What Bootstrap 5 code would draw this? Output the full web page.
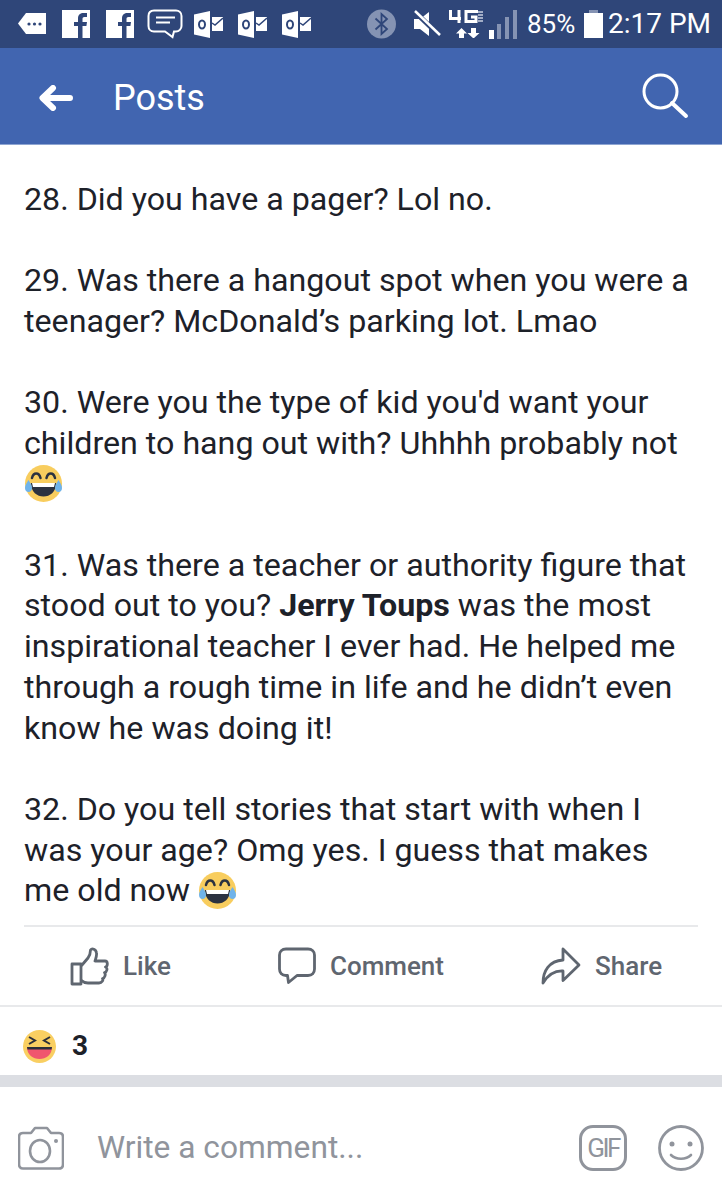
<!DOCTYPE html>
<html lang="en"><head><meta charset="utf-8"><title>Posts</title>
<link href="https://cdn.jsdelivr.net/npm/bootstrap@5.3.0/dist/css/bootstrap.min.css" rel="stylesheet">
<style>
html,body{margin:0;background:#fff}
body{font-family:Roboto,"Liberation Sans",sans-serif;width:722px;height:1200px;overflow:hidden;color:#1d2129}
.stat-bar{height:48px;background:#2f4679;color:#fff;padding-left:18px;font-size:28px;line-height:48px}
.stat-bar svg{display:block;flex:none}
.stat-pct{font-size:26px;margin-right:10px;width:47px;white-space:nowrap}
.app-bar{height:97px;background:#4165b0;border-bottom:1px solid #8ea5d2;color:#fff;padding-left:39px;padding-right:33px}
.app-back{margin-top:3px}
.app-title{font-size:36px;margin-left:40px;margin-top:3px;line-height:1}
.post-body{padding:33.500px 24px 0;font-size:32.2px;line-height:40.7px;height:780px;color:#1d2129}
.post-body p{margin:0 0 40.7px}
.post-body b{font-weight:700}
.emo{display:inline-block;vertical-align:-9px}
.act-row{margin:0 24px;height:80px;border-top:2px solid #e8e9eb;padding-left:46px}
.act-item{color:#5f6670;font-size:26px;font-weight:500;gap:14px}
.act-mid{margin-left:107px}
.act-last{margin-left:97px}
.act-full{border-bottom:2px solid #e8e9eb}
.react-row{height:68px;padding-left:23px;padding-top:10px;gap:16px;font-size:28px;font-weight:700;color:#1d2129}
.gap-band{height:12px;background:#dcdee3}
.cmt-row{height:113px;padding:9px 18px 0;color:#8f949b}
.cmt-text{font-size:31.7px;margin-left:33px;color:#90949c}
.gif-box{width:48px;height:46px;border:3px solid #90949c;border-radius:14px;font-size:26px;letter-spacing:-2.500px;color:#90949c;line-height:1}
</style></head><body>
<div class="stat-bar d-flex align-items-center">
<svg width="28" height="22" viewBox="0 0 28 22" style="margin-right:16px"><path d="M8 0H28V21H8L0 10.5Z" fill="#fff"/><circle cx="11" cy="11" r="1.6" fill="#2f4679"/><circle cx="16.5" cy="11" r="1.6" fill="#2f4679"/><circle cx="22" cy="11" r="1.6" fill="#2f4679"/></svg>
<svg width="28" height="28" viewBox="0 0 28 28" style="margin-right:16px"><rect width="28" height="28" fill="#fff"/><path d="M16 28V16H12V12H16V8.5C16 4.5 18.5 3 21.5 3H25V7H22.5C21 7 20.5 7.800 20.500 9V12H25L24.400 16H20.500V28Z" fill="#2f4679"/></svg>
<svg width="28" height="28" viewBox="0 0 28 28" style="margin-right:13px"><rect width="28" height="28" fill="#fff"/><path d="M16 28V16H12V12H16V8.5C16 4.5 18.5 3 21.5 3H25V7H22.5C21 7 20.5 7.800 20.500 9V12H25L24.400 16H20.500V28Z" fill="#2f4679"/></svg>
<svg width="36" height="30" viewBox="0 0 36 30" style="margin-right:11px"><path d="M7 1.500H29C32 1.500 34.500 3.500 34.500 7V17C34.500 20 32 22.500 29 22.500H27L25.500 28L18 22.500H7C3.500 22.500 1.500 20 1.500 17V7C1.500 3.500 3.500 1.500 7 1.500Z" fill="none" stroke="#fff" stroke-width="2"/><path d="M9 8.500H28M9 13.500H23" stroke="#fff" stroke-width="2"/></svg>
<svg width="29" height="27" viewBox="0 0 29 27" style="margin-right:15px"><path d="M0 3.500L16 0V27L0 23.500Z" fill="#fff"/><path d="M18 6H29V20H18Z" fill="#fff"/><ellipse cx="8" cy="13.500" rx="3" ry="4" fill="none" stroke="#2f4679" stroke-width="2"/><path d="M18 12L21 14L29 7" fill="none" stroke="#2f4679" stroke-width="1.500"/></svg>
<svg width="29" height="27" viewBox="0 0 29 27" style="margin-right:15px"><path d="M0 3.500L16 0V27L0 23.500Z" fill="#fff"/><path d="M18 6H29V20H18Z" fill="#fff"/><ellipse cx="8" cy="13.500" rx="3" ry="4" fill="none" stroke="#2f4679" stroke-width="2"/><path d="M18 12L21 14L29 7" fill="none" stroke="#2f4679" stroke-width="1.500"/></svg>
<svg width="29" height="27" viewBox="0 0 29 27" style="margin-right:56px"><path d="M0 3.500L16 0V27L0 23.500Z" fill="#fff"/><path d="M18 6H29V20H18Z" fill="#fff"/><ellipse cx="8" cy="13.500" rx="3" ry="4" fill="none" stroke="#2f4679" stroke-width="2"/><path d="M18 12L21 14L29 7" fill="none" stroke="#2f4679" stroke-width="1.500"/></svg>
<svg width="29" height="30" viewBox="0 0 29 30" style="margin-right:17px"><circle cx="14.500" cy="15" r="14.500" fill="#8593b3"/><path d="M8.500 9.500L20 20L14.500 25V5L20 10L8.500 20.500" fill="none" stroke="#2f4679" stroke-width="1.800"/></svg>
<svg width="28" height="28" viewBox="0 0 28 28" style="margin-right:8px"><path d="M1 9H7L16 2V26L7 19H1Z" fill="#fff"/><path d="M1 1L27 26" stroke="#2f4679" stroke-width="5"/><path d="M2 1L27 25" stroke="#fff" stroke-width="2.500"/></svg>
<svg width="34" height="28" viewBox="0 0 34 28" style="margin-right:6px"><path d="M1.500 0V8.500H12M10 0V13" fill="none" stroke="#fff" stroke-width="3"/><path d="M29 1.500H17V11.500H27V7H22" fill="none" stroke="#fff" stroke-width="3"/><path d="M29 2H34M29 5H34M29 8H34M29 11H34" stroke="#c9d0e0" stroke-width="1.300"/><path d="M12.500 18L18 23.500H15V28H10V23.500H7Z" fill="#fff"/><path d="M22 18H27V23H30.500L24.500 28.500L18.500 23H22Z" fill="#fff"/></svg>
<svg width="29" height="29" viewBox="0 0 29 29" style="margin-right:9px"><rect x="0" y="20" width="5" height="9" fill="#fff"/><rect x="8" y="14" width="4" height="15" fill="#8593b3"/><rect x="16" y="7" width="4" height="22" fill="#8593b3"/><rect x="24" y="0" width="4" height="29" fill="#8593b3"/></svg>
<span class="stat-pct">85%</span>
<svg width="19" height="28" viewBox="0 0 19 28" style="margin-right:5px"><rect x="5" width="9" height="4" fill="#8593b3"/><rect y="3" width="19" height="25" fill="#fff"/></svg>
<span class="text-nowrap">2:17 PM</span>
</div>
<header class="app-bar d-flex align-items-center">
<svg class="app-back" width="34" height="26" viewBox="0 0 34 26"><path d="M31 13H4M14 3L3.500 13L14 23" fill="none" stroke="#fff" stroke-width="6" stroke-linecap="round" stroke-linejoin="round"/></svg>
<span class="app-title">Posts</span>
<svg class="ms-auto" width="48" height="48" viewBox="0 0 48 48"><circle cx="19.500" cy="19.500" r="16.500" fill="none" stroke="#fff" stroke-width="3"/><path d="M31 31L45 44" stroke="#fff" stroke-width="4" stroke-linecap="round"/></svg>
</header>
<main class="post-body">
<p>28. Did you have a pager? Lol no.</p>
<p>29. Was there a hangout spot when you were a<br>teenager? McDonald’s parking lot. Lmao</p>
<p>30. Were you the type of kid you'd want your<br>children to hang out with? Uhhhh probably not<br><svg class="emo" width="39" height="39" viewBox="0 0 39 39"><use href="#cry"/></svg></p>
<p>31. Was there a teacher or authority figure that<br>stood out to you? <b>Jerry Toups</b> was the most<br>inspirational teacher I ever had. He helped me<br>through a rough time in life and he didn’t even<br>know he was doing it!</p>
<p class="mb-0">32. Do you tell stories that start with when I<br>was your age? Omg yes. I guess that makes<br>me old now <svg class="emo" width="39" height="39" viewBox="0 0 39 39"><use href="#cry"/></svg></p>
</main>
<div class="act-row d-flex align-items-center">
<div class="act-item d-flex align-items-center">
<svg width="39" height="39" viewBox="0 0 39 39"><g fill="none" stroke="#5f6670" stroke-width="2.800" stroke-linejoin="round" stroke-linecap="round"><path d="M2 17H11V37H2Z"/><path d="M12 18L18 11C20 8 20.500 5 20.500 3C22 1 26 2 26.500 6C27 9 25.500 12 25 14H35C38 14 38 19 35.500 20C38 21 37 25 34.500 25.500C36 27 35 31 32.500 31.500C33.500 33 32 36 29 36H18C15 36 13 35 11.500 33.500"/></g></svg>
<span>Like</span></div>
<div class="act-item act-mid d-flex align-items-center">
<svg width="38" height="38" viewBox="0 0 38 38"><path d="M8 2H30C34 2 36.500 4.500 36.500 8V22C36.500 26 34 28.500 30 28.500H19L10.500 35.500L9.500 28.500H8C4 28.500 1.500 26 1.500 22V8C1.500 4.500 4 2 8 2Z" fill="none" stroke="#5f6670" stroke-width="2.800" stroke-linejoin="round"/></svg>
<span>Comment</span></div>
<div class="act-item act-last d-flex align-items-center">
<svg width="40" height="38" viewBox="0 0 40 38"><path d="M2 36C2 24 8 14 22 13V2L38 18L22 33.500V24C13 23.500 7 28 2 36Z" fill="none" stroke="#5f6670" stroke-width="2.800" stroke-linejoin="round"/></svg>
<span>Share</span></div>
</div>
<div class="act-full"></div>
<div class="react-row d-flex align-items-center">
<svg width="33" height="33" viewBox="0 0 33 33"><circle cx="16.500" cy="16.500" r="16.500" fill="#f9cf62"/><path d="M4 17H29C29 25 23 29 16.500 29S4 25 4 17Z" fill="#f0566e"/><path d="M4 17H29L28.500 19.500H4.500Z" fill="#2b2f3a"/><path d="M6 7L12 10.500L6 14M27 7L21 10.500L27 14" fill="none" stroke="#2b2f3a" stroke-width="2"/></svg>
<span>3</span>
</div>
<div class="gap-band"></div>
<div class="cmt-row d-flex align-items-center">
<svg width="46" height="44" viewBox="0 0 46 44"><path d="M5 7H13L17 2H29L33 7H41C43.500 7 45 8.500 45 11V38C45 41 43.500 42.500 41 42.500H5C2.500 42.500 1 41 1 38V11C1 8.500 2.500 7 5 7Z" fill="none" stroke="#90949c" stroke-width="2.600" stroke-linejoin="round"/><ellipse cx="22" cy="25" rx="10" ry="11" fill="none" stroke="#90949c" stroke-width="2.600"/><circle cx="38" cy="15" r="2" fill="#90949c"/></svg>
<span class="cmt-text">Write a comment...</span>
<div class="gif-box d-flex align-items-center justify-content-center ms-auto">GIF</div>
<svg width="46" height="46" viewBox="0 0 46 46" style="margin-left:31px"><ellipse cx="23" cy="23" rx="21.500" ry="21.500" fill="none" stroke="#90949c" stroke-width="2.800"/><circle cx="14" cy="19" r="2.500" fill="#90949c"/><circle cx="32" cy="19" r="2.500" fill="#90949c"/><path d="M13 30C18 35 28 35 33 30" fill="none" stroke="#90949c" stroke-width="2.600" stroke-linecap="round"/></svg>
</div>
<svg width="0" height="0" class="position-absolute"><defs><symbol id="cry" viewBox="0 0 39 39"><circle cx="19.500" cy="19.500" r="18.500" fill="#f8cd5e"/><path d="M7 19H32C32 28 26 32.500 19.500 32.500S7 28 7 19Z" fill="#2b3240"/><path d="M8 19H31L30 23H9Z" fill="#fff"/><path d="M8 14C9.500 8 15 8 16.500 14M22.500 14C24 8 29.500 8 31 14" fill="none" stroke="#2b3240" stroke-width="2.500" stroke-linecap="round"/><path d="M4.500 16C6.500 19.500 8 21 8 24C8 26.500 6.500 28 4.500 28S1 26.500 1 24C1 21 2.500 19.500 4.500 16ZM34.500 16C36.500 19.500 38 21 38 24C38 26.500 36.500 28 34.500 28S31 26.500 31 24C31 21 32.500 19.500 34.500 16Z" fill="#6fb3ea"/></symbol></defs></svg>
<script src="https://cdn.jsdelivr.net/npm/bootstrap@5.3.0/dist/js/bootstrap.bundle.min.js"></script>
</body></html>
